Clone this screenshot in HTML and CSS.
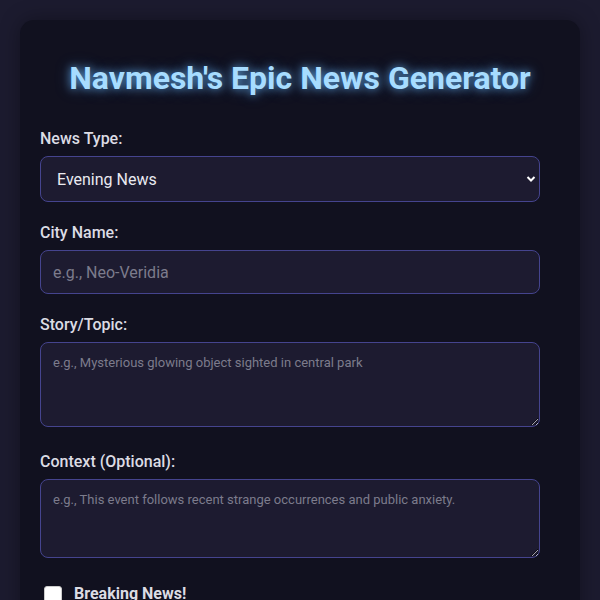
FILE: index.html
```html
<!DOCTYPE html>
<html lang="en">
<head>
<meta charset="utf-8">
<title>Navmesh's Epic News Generator</title>
<link rel="stylesheet" href="styles.css">
</head>
<body>
<div class="card">
  <h1 class="title">Navmesh's Epic News Generator</h1>
  <form class="form">
    <div class="group">
      <label class="label" for="type">News Type:</label>
      <div class="select-wrap">
        <select id="type" class="field select">
          <option>Evening News</option>
          <option>Morning News</option>
        </select>
        <svg class="chev" width="10" height="8" viewBox="0 0 10 8"><path d="M1.5 2 L5 5.5 L8.5 2" fill="none" stroke="#fff" stroke-width="2"/></svg>
      </div>
    </div>
    <div class="group">
      <label class="label" for="city">City Name:</label>
      <input id="city" class="field input" type="text" placeholder="e.g., Neo-Veridia">
    </div>
    <div class="group group-area">
      <label class="label" for="story">Story/Topic:</label>
      <textarea id="story" class="field area area-story" placeholder="e.g., Mysterious glowing object sighted in central park"></textarea>
    </div>
    <div class="group group-area">
      <label class="label" for="ctx">Context (Optional):</label>
      <textarea id="ctx" class="field area area-ctx" placeholder="e.g., This event follows recent strange occurrences and public anxiety."></textarea>
    </div>
    <div class="check-row">
      <input id="breaking" class="check" type="checkbox">
      <label class="check-label" for="breaking">Breaking News!</label>
    </div>
  </form>
</div>
</body>
</html>
```

FILE: styles.css
```css
html, body {
  margin: 0;
  padding: 0;
}
body {
  background: #1c1b2f;
  font-family: Roboto, "Liberation Sans", sans-serif;
  padding: 20px;
  color: #e0e0e8;
}
.card {
  background: #11111f;
  border-radius: 14px;
  padding: 35px 20px 40px;
  box-shadow: 0 0 20px rgba(0,0,0,0.35);
}
.title {
  margin: 0 0 28px;
  text-align: center;
  font-size: 32px;
  font-weight: 700;
  color: #a7dcff;
  text-shadow: 0 0 8px rgba(110, 190, 255, 0.75), 0 0 16px rgba(90, 170, 255, 0.35);
  line-height: 46px;
}
.form {
  display: flex;
  flex-direction: column;
  padding-right: 20px;
}
.group {
  display: flex;
  flex-direction: column;
  margin-bottom: 21px;
}
.group-area {
  margin-bottom: 25px;
}
.label {
  font-size: 16px;
  font-weight: 500;
  color: #dcdce4;
  line-height: 19px;
  margin-bottom: 8px;
}
.field {
  box-sizing: border-box;
  width: 100%;
  background: #1d1b30;
  border: 1px solid #45448e;
  border-radius: 8px;
  color: #eaeaf0;
  font-family: Roboto, "Liberation Sans", sans-serif;
  outline: none;
}
.field::placeholder {
  color: #7c7b8c;
}
.select-wrap {
  position: relative;
}
.select {
  appearance: none;
  -webkit-appearance: none;
  height: 46px;
  font-size: 16px;
  padding: 0 16px;
}
.chev {
  position: absolute;
  right: 4px;
  top: 19px;
  pointer-events: none;
}
.input {
  height: 44px;
  font-size: 16px;
  padding: 0 12px;
}
.area {
  font-size: 13px;
  padding: 12px;
  resize: vertical;
  line-height: 16px;
}
.area-story {
  height: 85px;
}
.area-ctx {
  height: 79px;
}
.check-row {
  display: flex;
  align-items: center;
  gap: 12px;
  padding-left: 4px;
}
.check {
  width: 18px;
  height: 18px;
  margin: 3px 0 0;
  appearance: none;
  -webkit-appearance: none;
  background: #ffffff;
  border-radius: 3px;
  border: 1px solid #ccc;
}
.check-label {
  font-size: 16px;
  font-weight: 700;
  color: #dcdce4;
}
```
